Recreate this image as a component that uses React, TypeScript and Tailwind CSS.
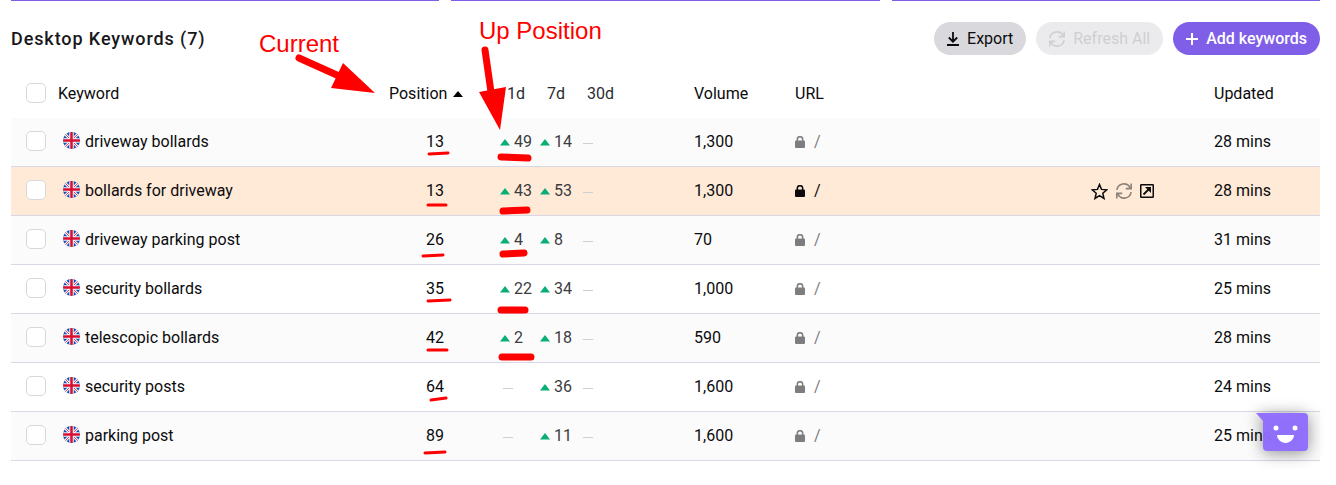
type Keyword = {
  name: string;
  position: number;
  day: number | null;
  week: number | null;
  volume: string;
  updated: string;
  active?: boolean;
};

const keywords: Keyword[] = [
  { name: 'driveway bollards', position: 13, day: 49, week: 14, volume: '1,300', updated: '28 mins' },
  { name: 'bollards for driveway', position: 13, day: 43, week: 53, volume: '1,300', updated: '28 mins', active: true },
  { name: 'driveway parking post', position: 26, day: 4, week: 8, volume: '70', updated: '31 mins' },
  { name: 'security bollards', position: 35, day: 22, week: 34, volume: '1,000', updated: '25 mins' },
  { name: 'telescopic bollards', position: 42, day: 2, week: 18, volume: '590', updated: '28 mins' },
  { name: 'security posts', position: 64, day: null, week: 36, volume: '1,600', updated: '24 mins' },
  { name: 'parking post', position: 89, day: null, week: 11, volume: '1,600', updated: '25 mins' },
];

function Checkbox({ label }: { label: string }) {
  return (
    <input
      type="checkbox"
      aria-label={label}
      className="block size-5 appearance-none rounded-[5px] border border-[#d8d8dc] bg-white checked:bg-[#7f5ee8]"
    />
  );
}

function Flag() {
  return (
    <svg viewBox="0 0 34 34" className="size-[17px] shrink-0" aria-hidden="true">
      <clipPath id="round">
        <circle cx="17" cy="17" r="17" />
      </clipPath>
      <g clipPath="url(#round)">
        <path fill="#0f52b4" d="M0 0h34v34H0z" />
        <path stroke="#f4f2f8" strokeWidth="5.500" d="M0 0l34 34M34 0L0 34" />
        <path stroke="#e0405c" strokeWidth="2" d="M0 0l34 34M34 0L0 34" />
        <path stroke="#f4f2f8" strokeWidth="9" d="M17 0v34M0 17h34" />
        <path stroke="#d80f30" strokeWidth="5" d="M17 0v34M0 17h34" />
      </g>
    </svg>
  );
}

function Lock() {
  return (
    <svg viewBox="0 0 10 12" className="h-3 w-[10px]" fill="currentColor" aria-hidden="true">
      <path d="M2.300 6V3.400a2.700 2.700 0 0 1 5.400 0V6" fill="none" stroke="currentColor" strokeWidth="1.500" />
      <rect y="4.500" width="10" height="7.500" rx="1" />
    </svg>
  );
}

function RefreshIcon() {
  return (
    <svg viewBox="0 0 16 16" className="size-4" fill="none" stroke="currentColor" strokeWidth="1.600" aria-hidden="true">
      <path d="M0.900 7A7 7 0 0 1 14 4.600M15.200 0.400v5.200H9.800" />
      <path d="M15.100 9A7 7 0 0 1 2 11.400M0.800 15.600v-5.200h5.400" />
    </svg>
  );
}

function Change({ value }: { value: number | null }) {
  if (value === null) {
    return <span aria-label="No change" className="mt-[3px] ml-[3px] block h-px w-[10px] bg-[#cfcfd3]" />;
  }
  return (
    <span className="flex items-center gap-1 text-[#3c3c40]">
      <svg viewBox="0 0 10 7" className="h-[7px] w-[10px]" fill="#0aae75" aria-hidden="true">
        <path d="M5 0l5 6.500H0z" />
      </svg>
      {value}
    </span>
  );
}

function RowActions() {
  return (
    <div className="flex items-center gap-2">
      <button aria-label="Favourite">
        <svg viewBox="0 0 17 17" className="size-[17px]" fill="none" stroke="currentColor" strokeWidth="1.500" aria-hidden="true">
          <path d="M8.500 1.500l2 4.900 5.300.4-4 3.500 1.200 5.200-4.500-2.800L4 15.500l1.200-5.200-4-3.500 5.300-.4z" />
        </svg>
      </button>
      <button aria-label="Refresh" className="text-[#8c8279]">
        <RefreshIcon />
      </button>
      <button aria-label="Open">
        <svg viewBox="0 0 14 14" className="size-[14px]" fill="none" stroke="currentColor" strokeWidth="1.500" aria-hidden="true">
          <rect x="0.750" y="0.750" width="12.500" height="12.500" rx="0.500" />
          <path d="M3.500 10.500l5-5" strokeWidth="1.800" />
          <path d="M5 3h6v6z" fill="currentColor" stroke="none" />
        </svg>
      </button>
    </div>
  );
}

function Toolbar() {
  return (
    <div className="flex items-center justify-between">
      <h2 className="text-lg font-medium tracking-wider text-[#18181b]">Desktop Keywords (7)</h2>
      <div className="flex gap-[10px]">
        <button className="flex h-[33px] items-center gap-2 rounded-full bg-[#d9d8dd] px-[13px]">
          <svg viewBox="0 0 12 14" className="h-[14px] w-3" fill="none" stroke="currentColor" strokeWidth="1.800" aria-hidden="true">
            <path d="M6 0v9.500M1.800 5.500L6 9.700l4.200-4.200M0 13h12" />
          </svg>
          Export
        </button>
        <button disabled className="flex h-[33px] items-center gap-2 rounded-full bg-[#ebebed] px-[13px] text-[#cfcfd2]">
          <RefreshIcon />
          Refresh All
        </button>
        <button className="flex h-[33px] items-center gap-2 rounded-full bg-[#7f5ee8] px-[13px] font-medium text-white">
          <svg viewBox="0 0 12 12" className="size-3" fill="none" stroke="currentColor" strokeWidth="2" aria-hidden="true">
            <path d="M6 0v12M0 6h12" />
          </svg>
          Add keywords
        </button>
      </div>
    </div>
  );
}

function KeywordTable() {
  return (
    <table className="mt-[14px] w-full table-fixed border-separate border-spacing-0 text-left">
      <colgroup>
        <col className="w-[47px]" />
        <col className="w-[331px]" />
        <col className="w-[111px]" />
        <col className="w-[40px]" />
        <col className="w-[40px]" />
        <col className="w-[114px]" />
        <col className="w-[101px]" />
        <col />
        <col className="w-[123px]" />
        <col className="w-[106px]" />
      </colgroup>
      <thead>
        <tr className="h-[49px]">
          <th className="pb-[2px] pl-[15px]"><Checkbox label="Select all" /></th>
          <th className="font-normal">Keyword</th>
          <th className="font-normal">
            <button className="flex items-center gap-[6px]">
              Position
              <svg viewBox="0 0 10 6" className="h-[6px] w-[10px]" aria-hidden="true">
                <path d="M5 0l5 6H0z" />
              </svg>
            </button>
          </th>
          <th className="pl-[7px] font-normal text-[#2c2c30]">1d</th>
          <th className="pl-[7px] font-normal text-[#2c2c30]">7d</th>
          <th className="pl-[7px] font-normal text-[#2c2c30]">30d</th>
          <th className="font-normal">Volume</th>
          <th className="font-normal">URL</th>
          <td />
          <th className="font-normal">Updated</th>
        </tr>
      </thead>
      <tbody>
        {keywords.map((k) => (
          <tr
            key={k.name}
            className={
              k.active
                ? 'h-[49px] bg-[#ffead8] [&>td]:border-b [&>td]:border-[#d9d5e4]'
                : 'h-[49px] odd:bg-[#fbfbfb] [&>td]:border-b [&>td]:border-[#d9d8e6]'
            }
          >
            <td className="pb-[2px] pl-[15px]"><Checkbox label={`Select ${k.name}`} /></td>
            <td>
              <div className="flex items-center gap-[5px] pl-[5px]">
                <span className="pb-1"><Flag /></span>
                {k.name}
              </div>
            </td>
            <td className="pl-[37px]">{k.position}</td>
            <td><Change value={k.day} /></td>
            <td><Change value={k.week} /></td>
            <td><Change value={null} /></td>
            <td>{k.volume}</td>
            <td>
              <a href="#" className={k.active ? 'flex items-center gap-[9px]' : 'flex items-center gap-[9px] text-[#7d7d80]'}>
                <Lock />/
              </a>
            </td>
            <td>{k.active && <RowActions />}</td>
            <td>{k.updated}</td>
          </tr>
        ))}
      </tbody>
    </table>
  );
}

// red marker notes drawn over the table
function Annotations() {
  return (
    <div className="pointer-events-none absolute top-0 left-0 font-['Liberation_Sans',sans-serif] text-2xl text-[#ff0000]">
      <span className="absolute top-[28px] left-[259px]">Current</span>
      <span className="absolute top-[15px] left-[479px] whitespace-nowrap">Up Position</span>
      <svg width="640" height="470" fill="none" stroke="#f00" strokeLinecap="round" aria-hidden="true">
        <path strokeWidth="7" d="M299 58l40 18M485 50l6 42" />
        <path fill="#f00" stroke="none" d="M375 93l-44-5 12-25zM500 130l-21-38 27-5z" />
        <path
          strokeWidth="3"
          d="M429 154l19-1M428 205h18M423 256l20-1M428 301l22-1M428 350h19M431 400l15-2M425 453l20-1"
        />
        <path
          strokeWidth="7"
          d="M501 157l27 1M503 211l24-1M503 254l21-1M501 310h24M502 357h29"
        />
      </svg>
    </div>
  );
}

function ChatButton() {
  return (
    <button aria-label="Open chat" className="fixed right-7 bottom-[34px] drop-shadow-[0_2px_8px_rgba(0,0,0,0.45)]">
      <svg viewBox="0 0 52 38" className="block h-[38px] w-[52px]" aria-hidden="true">
        <path fill="#906dfd" fillOpacity="0.97" d="M0 0h48a4 4 0 0 1 4 4v30a4 4 0 0 1-4 4H11a4 4 0 0 1-4-4V8z" />
        <circle cx="20" cy="15" r="2.500" fill="#fff" />
        <circle cx="39" cy="15" r="2.500" fill="#fff" />
        <path fill="#fff" d="M21 22h17c0 4-4 8-8.500 8S21 26 21 22z" />
      </svg>
    </button>
  );
}

export default function App() {
  return (
    <div className="relative bg-white pr-4 pb-6 pl-[11px] font-[Roboto,sans-serif] text-base text-[#0b0b0d]">
      <div className="grid grid-cols-3 gap-3">
        <div className="h-px bg-[#7f5ee8]" />
        <div className="h-px bg-[#7f5ee8]" />
        <div className="h-px bg-[#7f5ee8]" />
      </div>
      <div className="pt-[21px]">
        <Toolbar />
        <KeywordTable />
      </div>
      <Annotations />
      <ChatButton />
    </div>
  );
}
